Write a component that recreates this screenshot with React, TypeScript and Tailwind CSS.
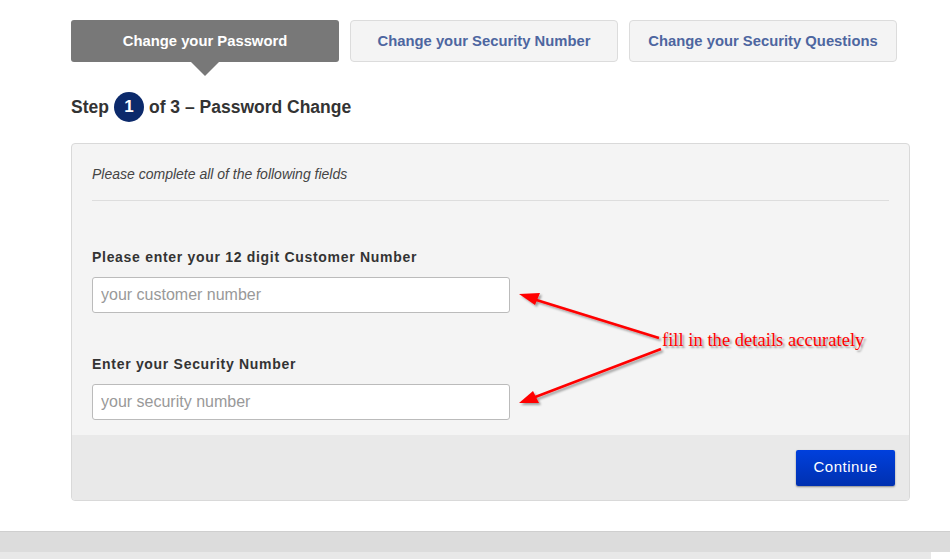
import React from "react";

const tabs = [
  { label: "Change your Password", active: true },
  { label: "Change your Security Number", active: false },
  { label: "Change your Security Questions", active: false },
];

function Field({ label, placeholder }: { label: string; placeholder: string }) {
  return (
    <div className="flex flex-col">
      <label className="text-[14px] font-bold text-[#333] tracking-[0.7px] leading-[18px]">{label}</label>
      <input
        type="text"
        placeholder={placeholder}
        className="mt-[11px] w-[418px] h-[36px] rounded-[3px] border border-[#bbb] bg-white px-[8px] text-[16px] text-[#333] placeholder:text-[#999] outline-none"
      />
    </div>
  );
}

export default function App() {
  return (
    <div className="relative w-[950px] h-[559px] overflow-hidden bg-white font-['Liberation_Sans',Arial,sans-serif]">
      <div className="ml-[71px] w-[839px] pt-[20px]">
        {/* tabs */}
        <div className="flex gap-[11px]">
          {tabs.map((t) =>
            t.active ? (
              <div key={t.label} className="relative w-[268px] h-[42px] rounded-[3px] bg-[#787878] flex items-center justify-center">
                <span className="text-[14.8px] font-bold text-white">{t.label}</span>
                <span className="absolute left-1/2 -translate-x-1/2 top-full w-0 h-0 border-l-[14px] border-r-[14px] border-t-[14px] border-l-transparent border-r-transparent border-t-[#787878]" />
              </div>
            ) : (
              <div key={t.label} className="w-[268px] h-[42px] rounded-[4px] bg-[#f4f4f4] border border-[#dcdcdc] flex items-center justify-center">
                <span className="text-[14.8px] font-bold text-[#4d66a0]">{t.label}</span>
              </div>
            )
          )}
        </div>

        {/* step */}
        <div className="flex items-center mt-[30px] h-[30px] text-[17.5px] font-bold text-[#333]">
          <span>Step</span>
          <span className="mx-[5px] w-[30px] h-[30px] rounded-full bg-[#0c2a6b] text-white flex items-center justify-center text-[17px]">1</span>
          <span>of 3 – Password Change</span>
        </div>

        {/* panel */}
        <div className="mt-[21px] rounded-[4px] border border-[#d9d9d9] bg-[#f4f4f4] overflow-hidden">
          <div className="px-[20px]">
            <p className="pt-[21px] pb-[17px] text-[14px] italic text-[#444] leading-[18px]">Please complete all of the following fields</p>
            <div className="w-[797px] h-px bg-[#ddd]" />
            <div className="pt-[47px] pb-[15px] flex flex-col gap-[42px]">
              <Field label="Please enter your 12 digit Customer Number" placeholder="your customer number" />
              <Field label="Enter your Security Number" placeholder="your security number" />
            </div>
          </div>
          <div className="h-[65px] bg-[#e9e9e9] flex items-center justify-end pr-[14px]">
            <button className="w-[99px] h-[36px] rounded-[2px] bg-gradient-to-b from-[#0040dd] to-[#0030b0] text-white text-[15px] tracking-[0.5px] shadow-[0_1px_2px_rgba(0,0,0,0.4)]">
              Continue
            </button>
          </div>
        </div>
      </div>

      {/* bottom strip */}
      <div className="mt-[30px] h-[21px] bg-[#dcdcdc] border-t border-[#cfcfcf]" />
      <div className="w-[931px] h-[10px] bg-[#e8e8e8]" />

      {/* annotation */}
      <svg className="absolute left-0 top-0 pointer-events-none" width="950" height="559">
        <defs>
          <filter id="sh" x="-10%" y="-10%" width="130%" height="130%">
            <feDropShadow dx="2" dy="2" stdDeviation="1" floodColor="#000" floodOpacity="0.35" />
          </filter>
        </defs>
        <g filter="url(#sh)" fill="#f00" stroke="#f00">
          <line x1="659" y1="338" x2="530" y2="298" strokeWidth="2.5" />
          <polygon points="519,294 540,293 535,305" stroke="none" />
          <line x1="661" y1="349" x2="530" y2="399" strokeWidth="2.5" />
          <polygon points="519,403 533,391 539,403" stroke="none" />
        </g>
      </svg>
      <span className="absolute left-[662px] top-[329px] text-[18.6px] leading-[22px] text-[#f00] font-['Liberation_Serif',serif] [text-shadow:2px_2px_2px_rgba(0,0,0,0.35)] whitespace-nowrap">
        fill in the details accurately
      </span>
    </div>
  );
}
